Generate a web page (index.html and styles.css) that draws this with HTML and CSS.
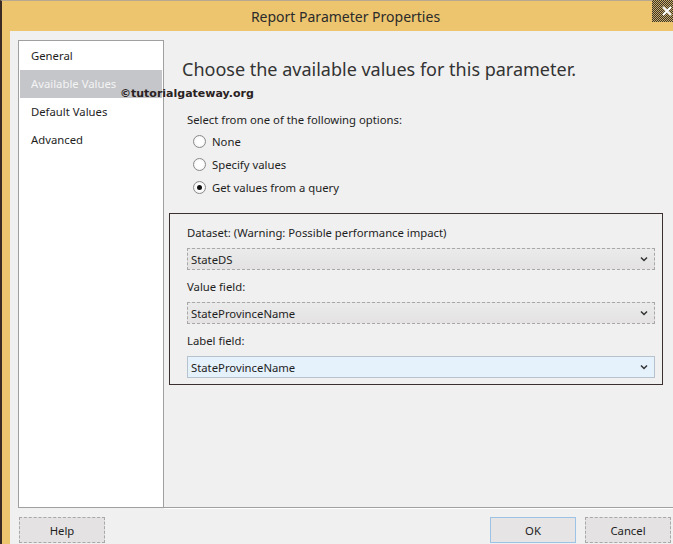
FILE: index.html
```html
<!DOCTYPE html>
<html>
<head>
<meta charset="utf-8">
<link rel="stylesheet" href="styles.css">
</head>
<body>
<div class="window">
  <div class="titlebar">
    <span class="title">Report Parameter Properties</span>
    <div class="close"><svg width="12" height="12" viewBox="0 0 12 12"><path d="M2 2 L10 10 M10 2 L2 10" stroke="#fff" stroke-width="2"/></svg></div>
  </div>
  <div class="client">
    <div class="body">
      <ul class="nav">
        <li>General</li>
        <li class="active">Available Values</li>
        <li>Default Values</li>
        <li>Advanced</li>
      </ul>
      <div class="main">
        <h1 class="heading">Choose the available values for this parameter.</h1>
        <p class="prompt">Select from one of the following options:</p>
        <div class="options">
          <label class="radio"><span class="dot"></span>None</label>
          <label class="radio"><span class="dot"></span>Specify values</label>
          <label class="radio checked"><span class="dot"></span>Get values from a query</label>
        </div>
        <div class="group">
          <div class="field-label">Dataset: (Warning: Possible performance impact)</div>
          <div class="select"><span>StateDS</span><svg class="chev" width="8" height="6" viewBox="0 0 8 6"><path d="M1 1.5 L4 4.5 L7 1.5" fill="none" stroke="#333" stroke-width="1.5"/></svg></div>
          <div class="field-label">Value field:</div>
          <div class="select"><span>StateProvinceName</span><svg class="chev" width="8" height="6" viewBox="0 0 8 6"><path d="M1 1.5 L4 4.5 L7 1.5" fill="none" stroke="#333" stroke-width="1.5"/></svg></div>
          <div class="field-label">Label field:</div>
          <div class="select focus"><span>StateProvinceName</span><svg class="chev" width="8" height="6" viewBox="0 0 8 6"><path d="M1 1.5 L4 4.5 L7 1.5" fill="none" stroke="#333" stroke-width="1.5"/></svg></div>
        </div>
      </div>
    </div>
    <div class="footer">
      <button class="btn">Help</button>
      <div class="right">
        <button class="btn default">OK</button>
        <button class="btn">Cancel</button>
      </div>
    </div>
    <div class="watermark">©tutorialgateway.org</div>
  </div>
</div>
</body>
</html>
```
FILE: styles.css
```css
* { box-sizing: border-box; }
html, body { margin: 0; padding: 0; }
body {
  width: 673px;
  height: 544px;
  overflow: hidden;
  font-family: "Noto Sans", "Open Sans", sans-serif;
  color: #1e1e1e;
}
.window {
  width: 690px;
  height: 544px;
  background: #ecc56e;
  border-left: 2px solid #3a2c24;
  border-top: 1px solid #b8a890;
  padding-left: 8px;
  display: flex;
  flex-direction: column;
}
.titlebar {
  height: 30px;
  position: relative;
  display: flex;
  align-items: center;
  justify-content: center;
  padding-left: 8px;
  padding-right: 17px;
}
.title {
  font-size: 14px;
  color: #2b2b2b;
}
.close {
  position: absolute;
  left: 642px;
  top: -1px;
  width: 30px;
  height: 22px;
  background: repeating-conic-gradient(#3b3325 0 25%, #c9ac6a 0 50%) 0 0 / 2px 2px;
  display: flex;
  align-items: center;
  justify-content: center;
}
.client {
  flex: 1;
  background: #f0f0f0;
  position: relative;
  display: flex;
  flex-direction: column;
}
.body {
  display: flex;
  padding: 9px 0 0 8px;
  height: 477px;
}
.nav {
  list-style: none;
  margin: 0;
  padding: 1px;
  width: 146px;
  height: 468px;
  background: #fff;
  border: 1px solid #a0a0a0;
  font-size: 11.3px;
}
.nav li {
  height: 28px;
  line-height: 28px;
  padding-left: 11px;
}
.nav li.active {
  background: #c4c6ca;
  color: #f4f4f4;
}
.main {
  flex: 1;
  border-bottom: 1px solid #a0a0a0;
  box-shadow: 0 1px 0 #fff;
  padding: 0 0 0 5px;
}
.heading {
  margin: 16px 0 0 13px;
  font-size: 18px;
  font-weight: normal;
  color: #333;
  line-height: 26px;
}
.prompt {
  margin: 30px 0 0 18px;
  font-size: 11.3px;
  line-height: 16px;
}
.options {
  display: flex;
  flex-direction: column;
  gap: 7px;
  margin: 5px 0 0 24px;
}
.radio {
  display: flex;
  align-items: center;
  font-size: 11.3px;
  height: 16px;
}
.dot {
  width: 13px;
  height: 13px;
  border-radius: 50%;
  border: 1px solid #8a8a8a;
  background: radial-gradient(circle, #fff 40%, #e8e8e8 100%);
  margin-right: 6px;
  display: flex;
  align-items: center;
  justify-content: center;
}
.radio.checked .dot::after {
  content: "";
  width: 5px;
  height: 5px;
  border-radius: 50%;
  background: #111;
}
.group {
  margin: 18px 0 0 0;
  width: 494px;
  height: 172px;
  border: 1px solid #3b3030;
  padding: 11px 7px 0 17px;
  display: flex;
  flex-direction: column;
}
.field-label {
  font-size: 11.3px;
  line-height: 16px;
  height: 23px;
  flex-shrink: 0;
}
.select {
  height: 22px;
  border: 1px dashed #a8a8a8;
  background: linear-gradient(#ebebeb, #e4e2e2);
  display: flex;
  align-items: center;
  justify-content: space-between;
  padding: 0 6px 0 3px;
  font-size: 11.3px;
  margin-bottom: 9px;
  flex-shrink: 0;
}
.select:last-child {
  margin-bottom: 0;
}
.select.focus {
  background: #e5f1fb;
  border: 1px solid #b6c3cf;
}
.footer {
  display: flex;
  justify-content: space-between;
  padding: 9px 0 0 9px;
}
.right {
  display: flex;
  gap: 9px;
  padding-right: 19px;
}
.btn {
  width: 86px;
  height: 26px;
  border: 1px dashed #a8a8a8;
  background: #e4e2e2;
  font-family: "Noto Sans", "Open Sans", sans-serif;
  font-size: 11.3px;
  color: #1e1e1e;
  padding: 0;
}
.btn.default {
  border: 1px solid #9cc2e6;
  background: #e6e4e4;
}
.watermark {
  position: absolute;
  left: 110px;
  top: 56px;
  font-family: "DejaVu Sans", sans-serif;
  font-weight: bold;
  font-size: 11px;
  color: #2a2222;
}
```
